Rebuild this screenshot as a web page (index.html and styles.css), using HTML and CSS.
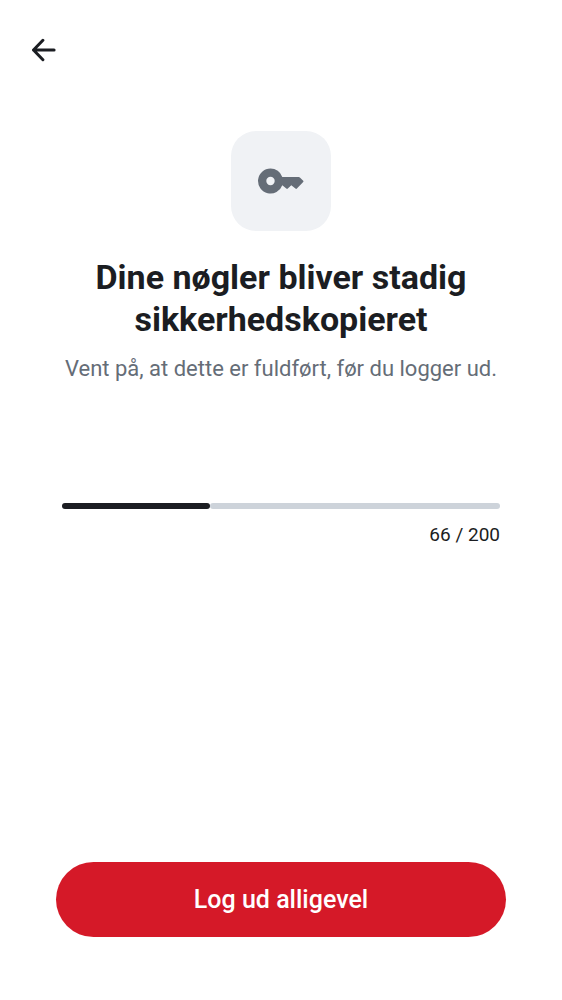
FILE: index.html
```html
<!DOCTYPE html>
<html lang="da">
<head>
<meta charset="utf-8">
<meta name="viewport" content="width=device-width, initial-scale=1">
<title>Log ud</title>
<link rel="stylesheet" href="styles.css">
</head>
<body>
<div class="screen">
  <header class="top-bar">
    <button class="back" type="button" aria-label="Tilbage">
      <svg class="back-icon" viewBox="0 0 24 24" aria-hidden="true"><path d="M10.9 2.3 1.5 12l9.4 9.7M1.5 12h20.6"/></svg>
    </button>
  </header>
  <main class="content">
    <div class="key-tile">
      <svg class="key-icon" viewBox="0 0 46 26" aria-hidden="true"><path fill-rule="evenodd" d="M12.5 .5a12.5 12.5 0 0 1 11.8 8.4h16.4q.7 0 1.2.5l3.3 3.3q.6.6 0 1.2l-6.3 6.6q-.7.8-1.5 0l-4.1-3.3-3.5 3.4q-.7.7-1.5 0l-4-3.4A12.5 12.5 0 1 1 12.5 .5zm0 8.3a4.2 4.2 0 1 0 0 8.4a4.2 4.2 0 0 0 0-8.4z"/></svg>
    </div>
    <h1 class="title">Dine nøgler bliver stadig sikkerhedskopieret</h1>
    <p class="subtitle">Vent på, at dette er fuldført, før du logger ud.</p>
    <section class="backup">
      <div class="progress" role="progressbar" aria-labelledby="count" aria-valuemin="0" aria-valuemax="200" aria-valuenow="66">
        <div class="progress-value" style="width: 33.8%"></div>
        <div class="progress-rest"></div>
      </div>
      <p class="count" id="count">66 / 200</p>
    </section>
  </main>
  <footer class="actions">
    <button class="logout" type="button">Log ud alligevel</button>
  </footer>
</div>
</body>
</html>
```

FILE: styles.css
```css
* {
  box-sizing: border-box;
}

body {
  margin: 0;
  background: #fff;
  color: #1b1d22;
  font-family: Roboto, "Liberation Sans", sans-serif;
}

h1,
p {
  margin: 0;
}

button {
  padding: 0;
  border: 0;
  font: inherit;
  cursor: pointer;
}

.screen {
  display: flex;
  flex-direction: column;
  min-height: 100vh;
}

.top-bar {
  display: flex;
  align-items: center;
  height: 100px;
  padding-left: 20px;
}

.back {
  display: grid;
  place-items: center;
  width: 48px;
  height: 48px;
  background: none;
  color: #1b1d22;
}

.back-icon {
  width: 24px;
  height: 24px;
  fill: none;
  stroke: currentColor;
  stroke-width: 3;
  stroke-linecap: round;
  stroke-linejoin: round;
}

.content {
  display: flex;
  flex: 1;
  flex-direction: column;
  align-items: center;
  padding: 31px 32px 0;
}

.key-tile {
  display: grid;
  place-items: center;
  width: 100px;
  height: 100px;
  border-radius: 25px;
  background: #f0f2f5;
}

.key-icon {
  width: 46px;
  height: 26px;
  fill: #656d77;
}

.title {
  max-width: 450px;
  margin-top: 25px;
  font-size: 34px;
  font-weight: 700;
  line-height: 42px;
  text-align: center;
}

.subtitle {
  margin-top: 13px;
  color: #656d77;
  font-size: 22px;
  line-height: 32px;
  text-align: center;
}

.backup {
  align-self: stretch;
  margin: 118px 30px 0;
}

.progress {
  display: flex;
  height: 6px;
}

.progress-value,
.progress-rest {
  border-radius: 3px;
}

.progress-value {
  background: #1b1d22;
}

.progress-rest {
  flex: 1;
  background: #cdd3da;
}

.count {
  margin-top: 13px;
  font-size: 19px;
  line-height: 26px;
  text-align: right;
}

.actions {
  padding: 0 56px 63px;
}

.logout {
  width: 100%;
  height: 75px;
  border-radius: 38px;
  background: #d51928;
  color: #fff;
  font-size: 25px;
  font-weight: 500;
}
```
